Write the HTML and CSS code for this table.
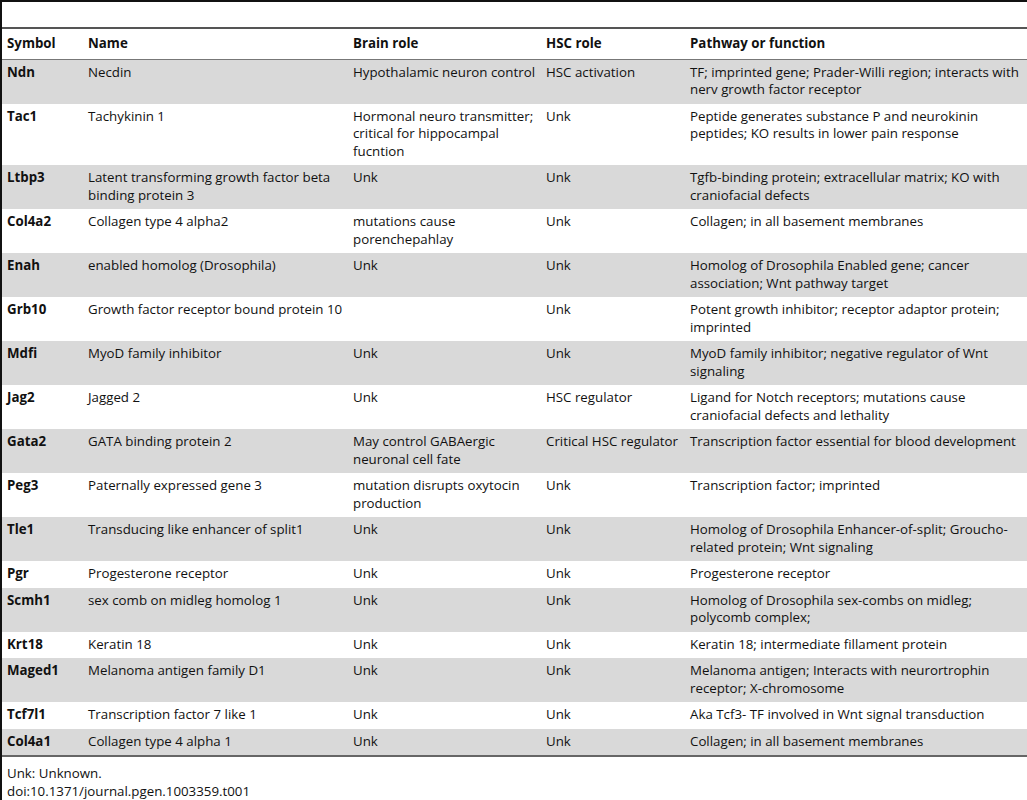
FILE: index.html
```html
<!DOCTYPE html>
<html lang="en">
<head>
<meta charset="UTF-8">
<title>Table 1 – Genes</title>
<link rel="stylesheet" href="styles.css">
</head>
<body>

<div class="page">
    <div class="top-rule"></div>

    <table class="genes">
        <colgroup>
            <col class="c-symbol">
            <col class="c-name">
            <col class="c-brain">
            <col class="c-hsc">
            <col class="c-path">
        </colgroup>
        <thead>
            <tr>
                <th>Symbol</th>
                <th>Name</th>
                <th>Brain role</th>
                <th>HSC role</th>
                <th>Pathway or function</th>
            </tr>
        </thead>
        <tbody>
            <tr class="shade">
                <td class="sym">Ndn</td>
                <td>Necdin</td>
                <td>Hypothalamic neuron control</td>
                <td>HSC activation</td>
                <td>TF; imprinted gene; Prader-Willi region; interacts with nerv growth factor receptor</td>
            </tr>
            <tr>
                <td class="sym">Tac1</td>
                <td>Tachykinin 1</td>
                <td>Hormonal neuro transmitter; critical for hippocampal fucntion</td>
                <td>Unk</td>
                <td>Peptide generates substance P and neurokinin peptides; KO results in lower pain response</td>
            </tr>
            <tr class="shade">
                <td class="sym">Ltbp3</td>
                <td>Latent transforming growth factor beta binding protein 3</td>
                <td>Unk</td>
                <td>Unk</td>
                <td>Tgfb-binding protein; extracellular matrix; KO with craniofacial defects</td>
            </tr>
            <tr>
                <td class="sym">Col4a2</td>
                <td>Collagen type 4 alpha2</td>
                <td>mutations cause porenchepahlay</td>
                <td>Unk</td>
                <td>Collagen; in all basement membranes</td>
            </tr>
            <tr class="shade">
                <td class="sym">Enah</td>
                <td>enabled homolog (Drosophila)</td>
                <td>Unk</td>
                <td>Unk</td>
                <td>Homolog of Drosophila Enabled gene; cancer association; Wnt pathway target</td>
            </tr>
            <tr>
                <td class="sym">Grb10</td>
                <td>Growth factor receptor bound protein 10</td>
                <td></td>
                <td>Unk</td>
                <td>Potent growth inhibitor; receptor adaptor protein; imprinted</td>
            </tr>
            <tr class="shade">
                <td class="sym">Mdfi</td>
                <td>MyoD family inhibitor</td>
                <td>Unk</td>
                <td>Unk</td>
                <td>MyoD family inhibitor; negative regulator of Wnt signaling</td>
            </tr>
            <tr>
                <td class="sym">Jag2</td>
                <td>Jagged 2</td>
                <td>Unk</td>
                <td>HSC regulator</td>
                <td>Ligand for Notch receptors; mutations cause craniofacial defects and lethality</td>
            </tr>
            <tr class="shade">
                <td class="sym">Gata2</td>
                <td>GATA binding protein 2</td>
                <td>May control GABAergic neuronal cell fate</td>
                <td>Critical HSC regulator</td>
                <td>Transcription factor essential for blood development</td>
            </tr>
            <tr>
                <td class="sym">Peg3</td>
                <td>Paternally expressed gene 3</td>
                <td>mutation disrupts oxytocin production</td>
                <td>Unk</td>
                <td>Transcription factor; imprinted</td>
            </tr>
            <tr class="shade">
                <td class="sym">Tle1</td>
                <td>Transducing like enhancer of split1</td>
                <td>Unk</td>
                <td>Unk</td>
                <td>Homolog of Drosophila Enhancer-of-split; Groucho-related protein; Wnt signaling</td>
            </tr>
            <tr>
                <td class="sym">Pgr</td>
                <td>Progesterone receptor</td>
                <td>Unk</td>
                <td>Unk</td>
                <td>Progesterone receptor</td>
            </tr>
            <tr class="shade">
                <td class="sym">Scmh1</td>
                <td>sex comb on midleg homolog 1</td>
                <td>Unk</td>
                <td>Unk</td>
                <td>Homolog of Drosophila sex-combs on midleg; polycomb complex;</td>
            </tr>
            <tr>
                <td class="sym">Krt18</td>
                <td>Keratin 18</td>
                <td>Unk</td>
                <td>Unk</td>
                <td>Keratin 18; intermediate fillament protein</td>
            </tr>
            <tr class="shade">
                <td class="sym">Maged1</td>
                <td>Melanoma antigen family D1</td>
                <td>Unk</td>
                <td>Unk</td>
                <td>Melanoma antigen; Interacts with neurortrophin receptor; X-chromosome</td>
            </tr>
            <tr>
                <td class="sym">Tcf7l1</td>
                <td>Transcription factor 7 like 1</td>
                <td>Unk</td>
                <td>Unk</td>
                <td>Aka Tcf3- TF involved in Wnt signal transduction</td>
            </tr>
            <tr class="shade">
                <td class="sym">Col4a1</td>
                <td>Collagen type 4 alpha 1</td>
                <td>Unk</td>
                <td>Unk</td>
                <td>Collagen; in all basement membranes</td>
            </tr>
        </tbody>
    </table>

    <div class="notes">
        <p>Unk: Unknown.</p>
        <p>doi:10.1371/journal.pgen.1003359.t001</p>
    </div>
</div>

</body>
</html>
```

FILE: styles.css
```css
body {
    margin: 0;
    font-family: 'Open Sans', sans-serif;
    font-size: 13.3px;
    color: #111;
    background: #fff;
}

.page {
    min-height: 100vh;
    border-left: 2px solid #111;
    box-sizing: border-box;
}

.top-rule {
    height: 2px;
    background: #111;
    margin-bottom: 25px;
}

.genes {
    width: 100%;
    border-collapse: collapse;
    table-layout: fixed;
    border-top: 2px solid #555;
    border-bottom: 2px solid #666;
}

.c-symbol { width: 81px; }
.c-name { width: 265px; }
.c-brain { width: 193px; }
.c-hsc { width: 144px; }

th,
td {
    text-align: left;
    vertical-align: top;
    padding: 4px 5px 5px 5px;
    line-height: 17.5px;
}

th {
    font-weight: 700;
    padding-top: 6px;
    padding-bottom: 6px;
    border-bottom: 1px solid #777;
}

.sym {
    font-weight: 700;
}

.shade td {
    background: #d9d9d9;
}

.notes {
    padding: 8px 5px 0;
}

.notes p {
    margin: 0;
    line-height: 17.5px;
}
```
